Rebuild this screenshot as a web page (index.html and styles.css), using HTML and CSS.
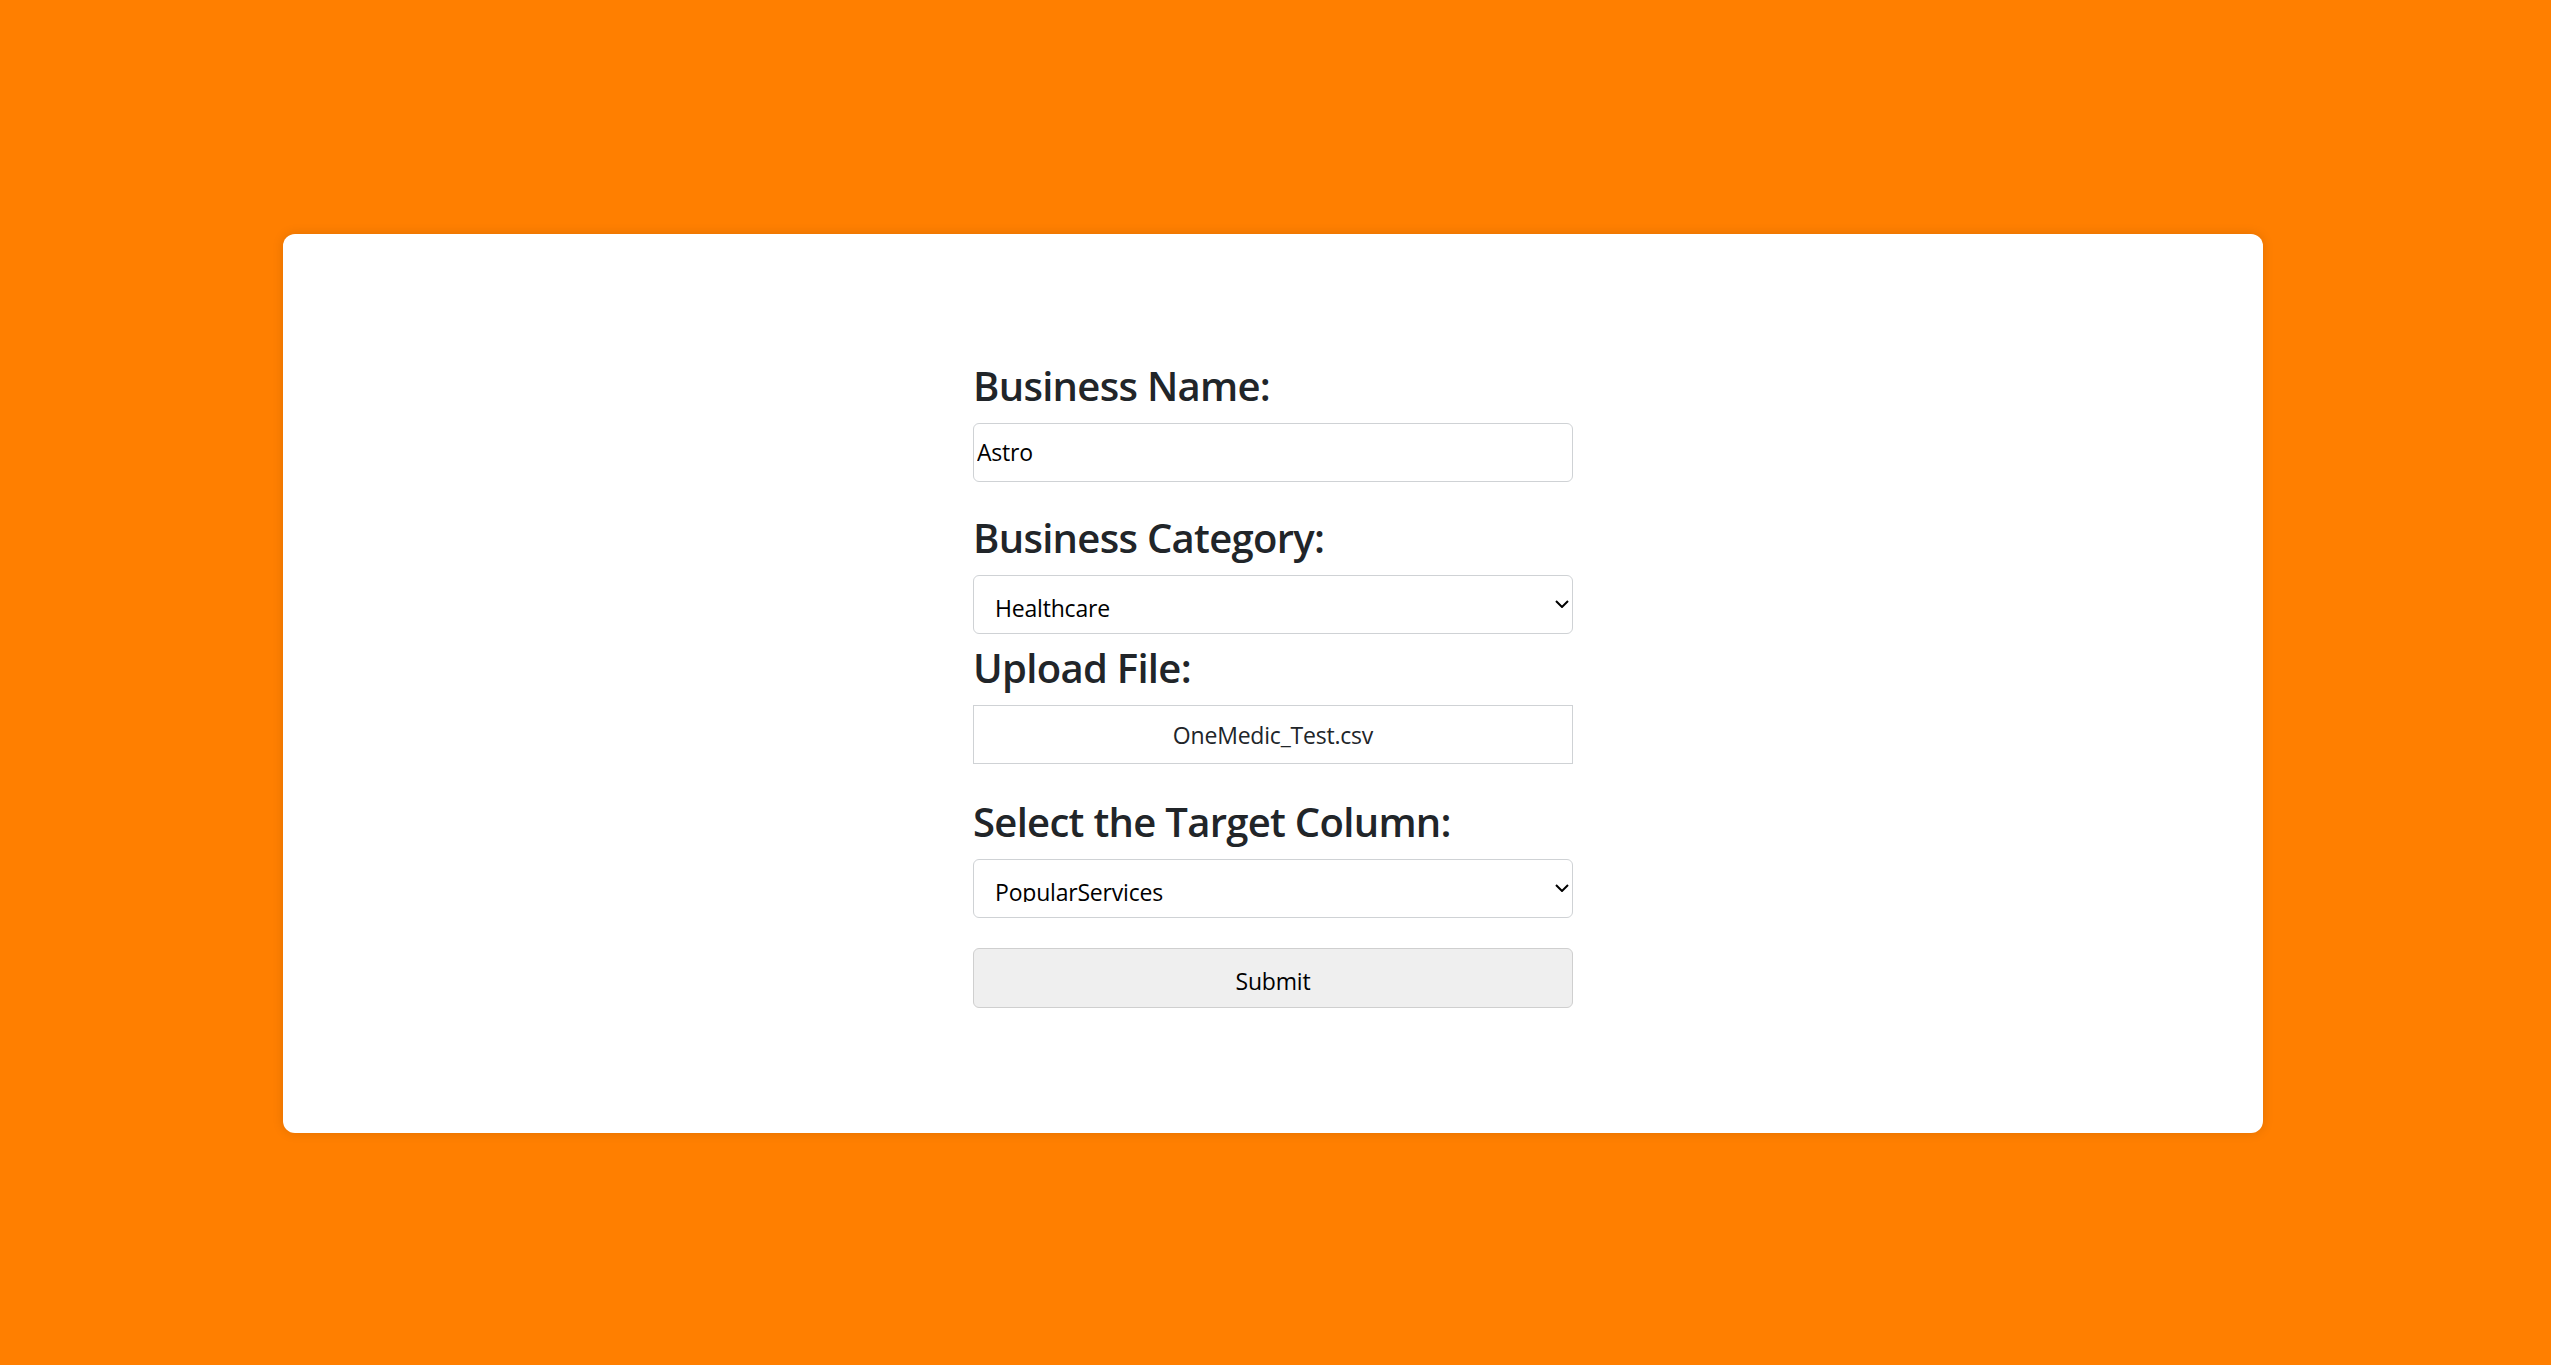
FILE: index.html
```html
<!DOCTYPE html>
<html lang="en">
<head>
  <meta charset="UTF-8" />
  <meta name="viewport" content="width=device-width, initial-scale=1" />
  <title>Business Upload</title>
  <link rel="stylesheet" href="styles.css">
</head>
<body>

<div class="card">
  <form class="upload-form" onsubmit="return false;">
    <!-- Name -->
    <h3 class="field-title">Business Name:</h3>
    <input class="text-input" type="text" name="business_name" value="Astro">

    <!-- Category -->
    <h3 class="field-title">Business Category:</h3>
    <select class="select-input category" name="category">
      <option>Healthcare</option>
      <option>Retail</option>
      <option>Education</option>
    </select>

    <!-- File -->
    <h3 class="field-title">Upload File:</h3>
    <label class="file-box">
      <input type="file" name="file" class="file-hidden">
      <span class="file-name">OneMedic_Test.csv</span>
    </label>

    <!-- Target -->
    <h3 class="field-title">Select the Target Column:</h3>
    <select class="select-input target" name="target">
      <option>PopularServices</option>
      <option>Rating</option>
    </select>

    <button type="submit" class="submit-btn">Submit</button>
  </form>
</div>

</body>
</html>
```

FILE: styles.css
```css
* {
  box-sizing: border-box;
}
body {
  margin: 0;
  min-height: 100vh;
  padding: 1px 5px 0 0;
  background-color: #ff7f00;
  font-family: 'Open Sans', 'Noto Sans', sans-serif;
  color: #212529;
  display: flex;
  align-items: center;
  justify-content: center;
}
.card {
  width: 1980px;
  background: #fff;
  border-radius: 12px;
  box-shadow: 0 0 12px rgba(0,0,0,0.12);
  padding: 127px 0 125px;
}
.upload-form {
  width: 600px;
  margin: 0 auto;
  display: flex;
  flex-direction: column;
}
.field-title {
  margin: 0 0 12px;
  font-size: 40px;
  font-weight: 600;
  letter-spacing: -0.7px;
  line-height: 50px;
  color: #212529;
}
.text-input {
  height: 59px;
  margin-bottom: 31px;
  padding: 0 3px;
  font-family: inherit;
  font-size: 23px;
  letter-spacing: -0.2px;
  color: #000;
  border: 1.5px solid #cfd2d5;
  border-radius: 6px;
  outline: none;
}
.select-input {
  appearance: none;
  -webkit-appearance: none;
  height: 59px;
  padding: 14px 40px 15px 21px;
  font-family: inherit;
  font-size: 23px;
  letter-spacing: -0.2px;
  line-height: 36px;
  color: #000;
  background: #fff url("data:image/svg+xml;utf8,<svg xmlns='http://www.w3.org/2000/svg' width='14' height='8' viewBox='0 0 14 8'><path d='M1 1l6 6 6-6' fill='none' stroke='black' stroke-width='2'/></svg>") no-repeat right 3px center;
  border: 1.5px solid #cfd2d5;
  border-radius: 6px;
  overflow: hidden;
}
.category {
  margin-bottom: 9px;
}
.target {
  margin-bottom: 30px;
}
.file-box {
  height: 59px;
  margin-bottom: 33px;
  display: flex;
  align-items: center;
  justify-content: center;
  border: 1.5px solid #cfd2d5;
  font-size: 23px;
  letter-spacing: -0.2px;
  color: #212529;
  cursor: pointer;
}
.file-hidden {
  display: none;
}
.file-name {
  padding-top: 2px;
}
.submit-btn {
  height: 60px;
  padding: 7px 0 0;
  font-family: inherit;
  font-size: 23px;
  letter-spacing: -0.2px;
  color: #000;
  background-color: #efefef;
  border: 1.5px solid #cfcfcf;
  border-radius: 6px;
  cursor: pointer;
}
.submit-btn:hover {
  background-color: #e5e5e5;
}
```
